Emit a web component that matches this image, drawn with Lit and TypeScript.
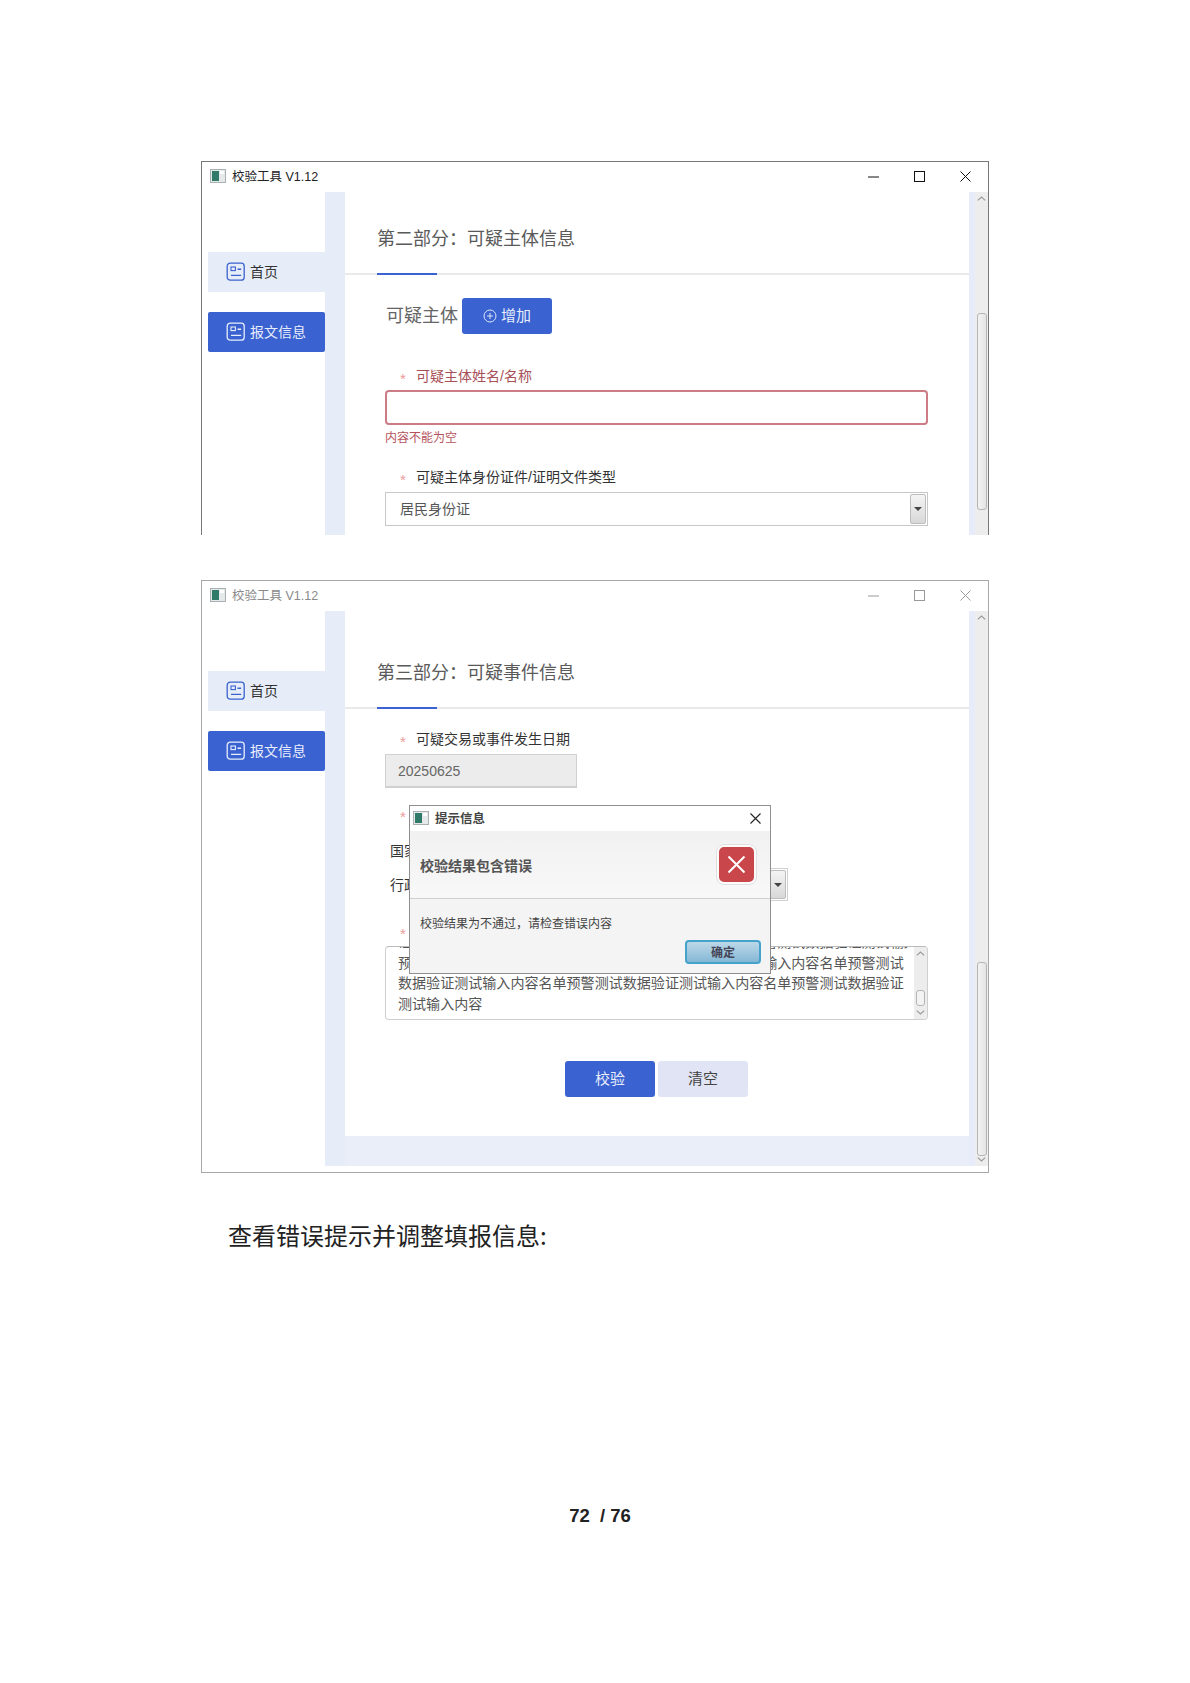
import { LitElement, html, css, svg } from "lit";
import { customElement } from "lit/decorators.js";

const COLON = "\uFF1A";
const COMMA = "\uFF0C";

const navIcon = (c: string) => html`<svg class="nav-ic" viewBox="0 0 20 20" width="20" height="20" fill="none" stroke=${c} stroke-width="1.3">
  <rect x="1.2" y="1.2" width="17" height="17" rx="3"/>
  <rect x="5" y="5" width="4.4" height="3.6" stroke-width="1.1"/>
  <path d="M11.5 7.2h3.6M5 13.4h10.2" stroke-width="1.4"/>
</svg>`;

const appIcon = html`<svg class="app-ic" viewBox="0 0 16 14" width="16" height="14">
  <rect x="0.5" y="0.5" width="15" height="13" fill="#e6e9ea" stroke="#a9b0b2"/>
  <rect x="2" y="2" width="7" height="10" fill="#2f7a68"/>
  <rect x="10" y="2" width="4" height="3" fill="#fff"/>
</svg>`;

const chevron = (up: boolean) => svg`<svg class="chev" viewBox="0 0 9 5" width="9" height="5" fill="none" stroke="#9a9a9a" stroke-width="1.2">
  <path d=${up ? "M0.8 4.4 4.5 1l3.7 3.4" : "M0.8 0.6 4.5 4l3.7-3.4"}/>
</svg>`;

@customElement("app-root")
export class AppRoot extends LitElement {
  static styles = css`
    :host { display: block; height: 1683px; background: #fff; overflow: hidden;
      font-family: "Liberation Sans", "Noto Sans CJK SC", sans-serif; color: #444; }
    .page { display: flex; flex-direction: column; padding: 161px 0 0 201px; }
    .window { position: relative; box-sizing: border-box; width: 788px; border: 1px solid #777; display: flex; flex-direction: column; background: #fff; }
    .window.first { height: 374px; border-bottom: 0; margin-bottom: 45px; }
    .window.second { height: 593px; border-color: #a8a8a8; }
    .titlebar { height: 30px; flex: none; display: flex; align-items: center; padding: 0 0 0 8px; font-size: 12.5px; color: #222; }
    .titlebar > span { position: relative; top: -2px; }
    .second > .titlebar { color: #8a8a8a; }
    .app-ic { margin-right: 6px; flex: none; position: relative; top: -1px; }
    .ctrls { margin-left: auto; display: flex; align-items: center; position: relative; top: -1px; }
    .ctrl { width: 46px; display: flex; justify-content: center; }
    .ctrl svg { stroke: #111; }
    .second .ctrl svg { stroke: #999; }
    .client { flex: 1; display: flex; min-height: 0; }
    .second .client { margin-bottom: 6px; }
    .side { width: 123px; flex: none; padding: 60px 0 0 6px; box-sizing: border-box; display: flex; flex-direction: column; gap: 20px; }
    .nav { height: 40px; display: flex; align-items: center; gap: 4px; padding-left: 18px; font-size: 14px; color: #333; background: #e7edf8; }
    .nav span { position: relative; top: -1px; }
    .nav.on { background: #3a62d0; color: #e8eefc; border-radius: 2px; }
    .strip { width: 20px; flex: none; background: #e7edf8; }
    .body { flex: 1; display: flex; flex-direction: column; min-width: 0; }
    .main { background: #fff; display: flex; flex-direction: column; flex: 1; min-height: 0; overflow: hidden; }
    .second .foot { height: 30px; flex: none; background: #e9eef8; }
    .head { flex: none; height: 83px; box-sizing: border-box; border-bottom: 2px solid #e9e9e9; position: relative; padding: 34px 0 0 32px; font-size: 18px; line-height: 26px; color: #5a5a5a; }
    .second .head { height: 98px; padding-top: 49px; }
    .head::after { content: ""; position: absolute; left: 32px; bottom: -2px; width: 60px; height: 2px; background: #3a62d0; }
    .strip-r { width: 6px; flex: none; background: #e8ecfa; }
    .scroll { width: 13px; flex: none; background: #ededed; position: relative; display: flex; flex-direction: column; align-items: center; justify-content: space-between; padding: 4px 0; box-sizing: border-box; }
    .first .scroll .chev:last-child { visibility: hidden; }
    .thumb { position: absolute; left: 2px; width: 10px; box-sizing: border-box; border: 1px solid #b5b5b5; border-radius: 3px; background: linear-gradient(90deg, #f3f3f3, #e4e4e4); }
    .first .thumb { top: 121px; height: 197px; }
    .second .thumb { top: 351px; height: 194px; }
    .fields { padding-left: 40px; width: 583px; box-sizing: border-box; display: flex; flex-direction: column; }
    .add-row { display: flex; align-items: center; margin: 23px 0 0 1px; font-size: 18px; color: #666; gap: 4px; }
    .add-row > span { position: relative; top: -2px; }
    .btn { box-sizing: border-box; width: 90px; height: 36px; padding-bottom: 3px; border-radius: 3px; display: flex; align-items: center; justify-content: center; gap: 4px; font-size: 15px; }
    .btn svg { position: relative; top: 1px; }
    .btn.blue { background: #3a62d0; color: #e8eefc; }
    .btn.pale { background: #e1e4f4; color: #444; }
    .label { height: 20px; box-sizing: border-box; padding: 0 0 2px 15px; line-height: 18px; font-size: 14px; display: flex; align-items: center; color: #333; }
    .label.err { color: #a85058; }
    .star { color: #ec9a9a; width: 16px; font-size: 15px; flex: none; position: relative; top: 3px; }
    .input { box-sizing: border-box; height: 34px; width: 543px; margin-top: 4px; font-size: 14px; display: flex; align-items: center; padding: 0 0 2px 14px; color: #555; }
    .input.bad { border: 2px solid #cc7c84; border-radius: 4px; height: 35px; margin-top: 3px; }
    .msg { font-size: 12px; line-height: 16px; color: #b5535c; margin-top: 5px; }
    .select { border: 1px solid #c8c8c8; position: relative; }
    .drop { position: absolute; right: 1px; top: 1px; bottom: 1px; width: 16px; box-sizing: border-box; border: 1px solid #bdbdbd; border-radius: 2px; background: linear-gradient(#f4f4f4, #d8d8d8); display: flex; align-items: center; justify-content: center; }
    .tri { width: 0; height: 0; border-left: 4px solid transparent; border-right: 4px solid transparent; border-top: 4px solid #444; }
    .date { width: 192px; background: #ececec; border: 1px solid #d0d0d0; border-bottom-width: 2px; padding: 0 0 0 12px; color: #666; font-family: "Liberation Sans", sans-serif; }
    .plain-row { height: 34px; display: flex; align-items: center; font-size: 14px; color: #333; position: relative; padding-left: 5px; }
    .mini-select { position: absolute; left: 300px; width: 103px; top: 1px; height: 33px; background: #fff; border: 1px solid #d0d0d0; box-sizing: border-box; }
    .area { box-sizing: border-box; width: 543px; height: 74px; margin-top: 4px; border: 1px solid #cfcfcf; border-top-color: #bbb; border-radius: 4px; position: relative; overflow: hidden; display: flex; flex-direction: column; justify-content: flex-end; padding: 0 18px 5px 12px; font-size: 14.05px; line-height: 20.5px; color: #555; }
    .line { white-space: nowrap; }
    .area-sb { position: absolute; top: 0; right: 0; bottom: 0; width: 13px; background: #ededed; display: flex; flex-direction: column; align-items: center; justify-content: space-between; padding: 4px 0; box-sizing: border-box; }
    .area-th { position: absolute; left: 2px; bottom: 13px; width: 9px; height: 16px; box-sizing: border-box; border: 1px solid #b5b5b5; border-radius: 3px; background: #f3f3f3; }
    .actions { display: flex; gap: 3px; margin: 41px 0 0 180px; }
    .dialog { position: absolute; left: 207px; top: 224px; width: 362px; height: 169px; box-sizing: border-box; border: 1px solid #8f8f8f; background: #f4f4f4; display: flex; flex-direction: column; }
    .d-title { height: 25px; flex: none; background: #fff; display: flex; align-items: center; padding-left: 3px; font-size: 12.5px; font-weight: 700; color: #444; }
    .d-title > span { position: relative; top: -1px; }
    .d-title svg.x { margin-left: auto; margin-right: 9px; }
    .d-head { height: 68px; flex: none; box-sizing: border-box; display: flex; align-items: center; justify-content: space-between; padding: 0 13px 0 10px; border-bottom: 1px solid #cfcfcf; background: linear-gradient(#f1f1f1, #f8f8f8); font-size: 14px; font-weight: 700; color: #555; }
    .d-err { width: 41px; height: 41px; box-sizing: border-box; border: 3px solid #fbfbfb; outline: 1px solid #e0e0e0; outline-offset: -1px; border-radius: 8px; background: #c9474a; display: flex; align-items: center; justify-content: center; }
    .d-msg { font-size: 12px; line-height: 16px; padding: 17px 0 0 10px; color: #444; }
    .d-ok { align-self: flex-end; margin: 8px 9px 0 0; width: 76px; height: 24px; padding-bottom: 2px; box-sizing: border-box; border: 2px solid #45a3cb; border-radius: 4px; background: linear-gradient(#bcd8e8, #85b8d6); display: flex; align-items: center; justify-content: center; font-size: 12px; font-weight: 700; color: #445; }
    .para { margin: 47px 0 0 27px; font-size: 24px; line-height: 30px; color: #222; font-family: "Noto Sans CJK SC", sans-serif; }
    .pageno { width: 788px; margin-top: 254px; text-align: center; font-size: 18.5px; line-height: 24px; font-weight: 700; color: #222; padding-left: 10px; box-sizing: border-box; white-space: pre; }
  `;

  private frame(title: string, cls: string, content: unknown, extra: unknown = null) {
    return html`<div class="window ${cls}">
      <div class="titlebar">
        ${appIcon}<span>${title}</span>
        <div class="ctrls">
          <div class="ctrl"><svg width="11" height="11" viewBox="0 0 11 11" fill="none"><path d="M0 6h11"/></svg></div>
          <div class="ctrl"><svg width="11" height="11" viewBox="0 0 11 11" fill="none"><rect x=".5" y=".5" width="10" height="10"/></svg></div>
          <div class="ctrl"><svg width="11" height="11" viewBox="0 0 11 11" fill="none"><path d="M.5.5l10 10M10.5.5l-10 10"/></svg></div>
        </div>
      </div>
      <div class="client">
        <div class="side">
          <div class="nav">${navIcon("#3a62d0")}<span>首页</span></div>
          <div class="nav on">${navIcon("#e8eefc")}<span>报文信息</span></div>
        </div>
        <div class="strip"></div>
        <div class="body">
          <div class="main">${content}</div>
          <div class="foot"></div>
        </div>
        <div class="strip-r"></div>
        <div class="scroll">${chevron(true)}<div class="thumb"></div>${chevron(false)}</div>
      </div>
      ${extra}
    </div>`;
  }

  render() {
    const first = html`
      <div class="head">${"第二部分" + COLON + "可疑主体信息"}</div>
      <div class="fields">
        <div class="add-row"><span>可疑主体</span>
          <div class="btn blue"><svg width="14" height="14" viewBox="0 0 14 14" fill="none" stroke="#dfe7fb" stroke-width="1"><circle cx="7" cy="7" r="6"/><path d="M7 4v6M4 7h6"/></svg><span>增加</span></div>
        </div>
        <div class="label err" style="margin-top:33px"><span class="star">*</span>可疑主体姓名/名称</div>
        <div class="input bad"></div>
        <div class="msg">内容不能为空</div>
        <div class="label" style="margin-top:22px"><span class="star">*</span>可疑主体身份证件/证明文件类型</div>
        <div class="input select">居民身份证<div class="drop"><div class="tri"></div></div></div>
      </div>`;

    const second = html`
      <div class="head">${"第三部分" + COLON + "可疑事件信息"}</div>
      <div class="fields">
        <div class="label" style="margin-top:21px"><span class="star">*</span>可疑交易或事件发生日期</div>
        <div class="input date">20250625</div>
        <div class="label" style="margin-top:17px"><span class="star">*</span></div>
        <div class="plain-row" style="margin-top:8px">国家</div>
        <div class="plain-row">行政
          <div class="mini-select select"><div class="drop"><div class="tri"></div></div></div>
        </div>
        <div class="label" style="margin-top:21px"><span class="star">*</span></div>
        <div class="area">
          <div class="line">证测试输入内容名单预警测试数据验证测试输入内容名单预警测试数据验证测试输入内容名单</div>
          <div class="line">预警测试数据验证测试输入内容名单预警测试数据验证测试输入内容名单预警测试</div>
          <div class="line">数据验证测试输入内容名单预警测试数据验证测试输入内容名单预警测试数据验证</div>
          <div class="line">测试输入内容</div>
          <div class="area-sb">${chevron(true)}<div class="area-th"></div>${chevron(false)}</div>
        </div>
        <div class="actions">
          <div class="btn blue">校验</div>
          <div class="btn pale">清空</div>
        </div>
      </div>`;

    const dialog = html`<div class="dialog">
      <div class="d-title">${appIcon}<span>提示信息</span>
        <svg class="x" width="11" height="11" viewBox="0 0 11 11" fill="none" stroke="#222" stroke-width="1.1"><path d="M.5.5l10 10M10.5.5l-10 10"/></svg>
      </div>
      <div class="d-head"><span>校验结果包含错误</span>
        <div class="d-err"><svg width="19" height="19" viewBox="0 0 19 19" fill="none" stroke="#fff" stroke-width="2"><path d="M1.5 1.5l16 16M17.5 1.5l-16 16"/></svg></div>
      </div>
      <div class="d-msg">${"校验结果为不通过" + COMMA + "请检查错误内容"}</div>
      <div class="d-ok">确定</div>
    </div>`;

    return html`<div class="page">
      ${this.frame("校验工具 V1.12", "first", first)}
      ${this.frame("校验工具 V1.12", "second", second, dialog)}
      <div class="para">查看错误提示并调整填报信息:</div>
      <div class="pageno">72  / 76</div>
    </div>`;
  }
}
